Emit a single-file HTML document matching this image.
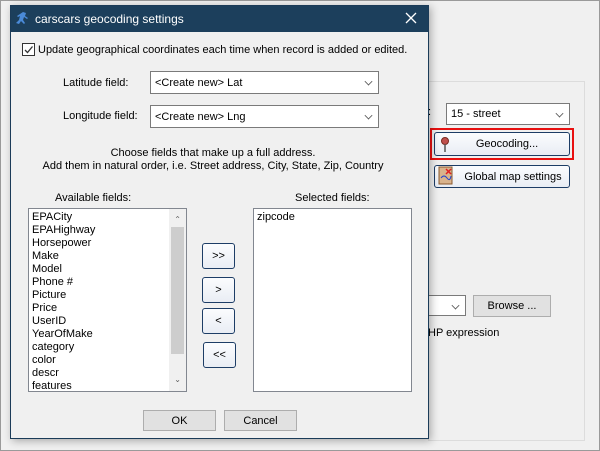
<!DOCTYPE html>
<html><head><style>
*{box-sizing:border-box;margin:0;padding:0}
body{width:600px;height:451px;background:#f0f0f0;font-family:"Liberation Sans","DejaVu Sans",sans-serif;font-size:11px;color:#000;position:relative;overflow:hidden}
.a{position:absolute;white-space:nowrap}
.combo{position:absolute;background:#fff;border:1px solid #7a7a7a;padding-left:4px;line-height:20px}
.chev{position:absolute;right:6px;top:6px;width:7px;height:7px;border-right:1px solid #555;border-bottom:1px solid #555;transform:rotate(45deg) scale(.8)}
.btn{position:absolute;border:1px solid #1d3d66;border-radius:3px;background:linear-gradient(#fbfcfe,#e9edf4);text-align:center}
.gb{position:absolute;background:#e1e1e1;border:1px solid #adadad;text-align:center}
.list{position:absolute;background:#fff;border:1px solid #828790}
</style></head><body>
<div class="a" style="left:0;top:0;width:600px;height:451px;border:1px solid #9a9a9a"></div>
<div class="a" style="left:428px;top:81px;width:157px;height:360px;border:1px solid #dcdcdc"></div>
<div class="a" style="left:428px;top:106px">:</div>
<div class="combo" style="left:446px;top:103px;width:124px;height:22px;line-height:21px">15 - street<div class="chev"></div></div>
<div class="a" style="left:430px;top:128px;width:144px;height:32px;border:2px solid #e81010"></div>
<div class="btn" style="left:434px;top:132px;width:136px;height:24px;line-height:23px;padding-left:10px">Geocoding...</div>
<svg class="a" style="left:441px;top:136px" width="10" height="17"><circle cx="4" cy="5" r="3.5" fill="#c0504d" stroke="#7a2a20"/><line x1="4" y1="8" x2="4" y2="16" stroke="#555" stroke-width="1.5"/></svg>
<div class="btn" style="left:434px;top:165px;width:136px;height:23px;line-height:22px;padding-left:22px">Global map settings</div>
<svg class="a" style="left:438px;top:166px" width="15" height="20"><rect x="1" y="1" width="13" height="17" fill="#d9b38c" stroke="#8a5a30"/><path d="M3 12 q3 -4 6 0 t4 -2" stroke="#2244cc" fill="none"/><path d="M8 3 l5 5 M13 3 l-5 5" stroke="#e02020" stroke-width="1.5"/></svg>
<div class="combo" style="left:420px;top:295px;width:46px;height:21px"><div class="chev"></div></div>
<div class="gb" style="left:473px;top:295px;width:78px;height:22px;line-height:21px">Browse ...</div>
<div class="a" style="left:428px;top:327px">HP expression</div>

<div class="a" style="left:10px;top:5px;width:419px;height:434px;background:#f0f0f0;border:1px solid #1b3b58;box-shadow:2px 2px 8px rgba(0,0,0,.3)"></div>
<div class="a" style="left:11px;top:6px;width:417px;height:26px;background:#1c3f5c;color:#fff;font-size:12px;line-height:26px;padding-left:24px">carscars geocoding settings</div>
<svg class="a" style="left:14px;top:11px" width="16" height="16"><path d="M9 1 l3 1 -1 3 3 2 -1 1 -3 -2 -1 3 2 3 -1 1 -3 -3 -2 3 -3 -1 3 -3 1 -4 -2 1 -1 -1 3 -2z" fill="#4a8ad8"/></svg>
<svg class="a" style="left:405px;top:12px" width="12" height="12"><path d="M1 1L11 11M11 1L1 11" stroke="#fff" stroke-width="1.3"/></svg>

<div class="a" style="left:22px;top:43px;width:13px;height:13px;border:1px solid #333;background:#fff"></div>
<svg class="a" style="left:23px;top:44px" width="11" height="11"><path d="M2 6 L4.5 8.5 L9.5 2.5" stroke="#333" stroke-width="1.3" fill="none"/></svg>
<div class="a" style="left:38px;top:44px">Update geographical coordinates each time when record is added or edited.</div>
<div class="a" style="left:63px;top:77px">Latitude field:</div>
<div class="combo" style="left:150px;top:71px;width:229px;height:23px;line-height:22px">&lt;Create new&gt; Lat<div class="chev"></div></div>
<div class="a" style="left:63px;top:110px">Longitude field:</div>
<div class="combo" style="left:150px;top:105px;width:229px;height:23px;line-height:22px">&lt;Create new&gt; Lng<div class="chev"></div></div>
<div class="a" style="left:11px;width:404px;top:147px;text-align:center;line-height:13px">Choose fields that make up a full address.<br>Add them in natural order, i.e. Street address, City, State, Zip, Country</div>
<div class="a" style="left:55px;top:192px">Available fields:</div>
<div class="a" style="left:295px;top:192px">Selected fields:</div>
<div class="list" style="left:28px;top:208px;width:159px;height:184px">
<div style="position:absolute;left:3px;top:2px;line-height:13px">EPACity<br>EPAHighway<br>Horsepower<br>Make<br>Model<br>Phone #<br>Picture<br>Price<br>UserID<br>YearOfMake<br>category<br>color<br>descr<br>features</div>
<div style="position:absolute;right:0;top:0;width:17px;height:182px;background:#f0f0f0"></div>
<div style="position:absolute;right:2px;top:18px;width:13px;height:127px;background:#cdcdcd"></div>
<div style="position:absolute;right:5px;top:6px;font-size:8px;color:#606060">&#8963;</div>
<div style="position:absolute;right:5px;top:166px;font-size:8px;color:#606060">&#8964;</div>
</div>
<div class="list" style="left:253px;top:208px;width:159px;height:184px"><div style="position:absolute;left:3px;top:2px">zipcode</div></div>
<div class="btn" style="left:202px;top:243px;width:33px;height:26px;line-height:24px">&gt;&gt;</div>
<div class="btn" style="left:202px;top:277px;width:33px;height:26px;line-height:24px">&gt;</div>
<div class="btn" style="left:202px;top:308px;width:33px;height:26px;line-height:24px">&lt;</div>
<div class="btn" style="left:203px;top:342px;width:33px;height:26px;line-height:24px">&lt;&lt;</div>
<div class="gb" style="left:143px;top:410px;width:73px;height:21px;line-height:20px">OK</div>
<div class="gb" style="left:224px;top:410px;width:73px;height:21px;line-height:20px">Cancel</div>
</body></html>
